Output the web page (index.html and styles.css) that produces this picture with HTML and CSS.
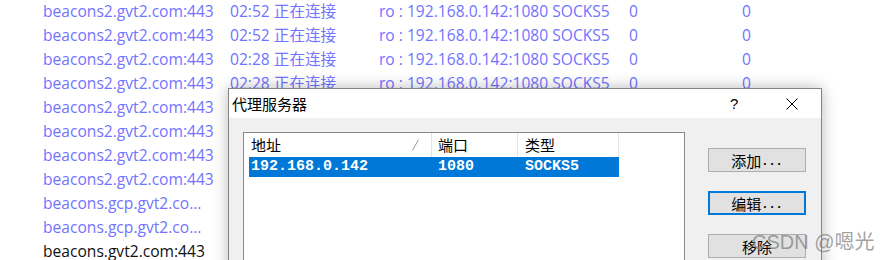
FILE: index.html
```html
<!DOCTYPE html>
<html lang="zh">
<head>
<meta charset="utf-8">
<link rel="stylesheet" href="styles.css">
</head>
<body>
<div class="conns">
  <div class="row"><span class="c-host">beacons2.gvt2.com:443</span><span class="c-time">02:52 正在连接</span><span class="c-proxy">ro : 192.168.0.142:1080 SOCKS5</span><span class="c-n1">0</span><span class="c-n2">0</span></div>
  <div class="row"><span class="c-host">beacons2.gvt2.com:443</span><span class="c-time">02:52 正在连接</span><span class="c-proxy">ro : 192.168.0.142:1080 SOCKS5</span><span class="c-n1">0</span><span class="c-n2">0</span></div>
  <div class="row"><span class="c-host">beacons2.gvt2.com:443</span><span class="c-time">02:28 正在连接</span><span class="c-proxy">ro : 192.168.0.142:1080 SOCKS5</span><span class="c-n1">0</span><span class="c-n2">0</span></div>
  <div class="row"><span class="c-host">beacons2.gvt2.com:443</span><span class="c-time">02:28 正在连接</span><span class="c-proxy">ro : 192.168.0.142:1080 SOCKS5</span><span class="c-n1">0</span><span class="c-n2">0</span></div>
  <div class="row"><span class="c-host">beacons2.gvt2.com:443</span><span class="c-time">02:28 正在连接</span><span class="c-proxy">ro : 192.168.0.142:1080 SOCKS5</span><span class="c-n1">0</span><span class="c-n2">0</span></div>
  <div class="row"><span class="c-host">beacons2.gvt2.com:443</span><span class="c-time">02:28 正在连接</span><span class="c-proxy">ro : 192.168.0.142:1080 SOCKS5</span><span class="c-n1">0</span><span class="c-n2">0</span></div>
  <div class="row"><span class="c-host">beacons2.gvt2.com:443</span><span class="c-time">02:28 正在连接</span><span class="c-proxy">ro : 192.168.0.142:1080 SOCKS5</span><span class="c-n1">0</span><span class="c-n2">0</span></div>
  <div class="row"><span class="c-host">beacons2.gvt2.com:443</span><span class="c-time">02:28 正在连接</span><span class="c-proxy">ro : 192.168.0.142:1080 SOCKS5</span><span class="c-n1">0</span><span class="c-n2">0</span></div>
  <div class="row"><span class="c-host">beacons.gcp.gvt2.co...</span><span class="c-time">02:28 正在连接</span><span class="c-proxy">ro : 192.168.0.142:1080 SOCKS5</span><span class="c-n1">0</span><span class="c-n2">0</span></div>
  <div class="row"><span class="c-host">beacons.gcp.gvt2.co...</span><span class="c-time">02:28 正在连接</span><span class="c-proxy">ro : 192.168.0.142:1080 SOCKS5</span><span class="c-n1">0</span><span class="c-n2">0</span></div>
  <div class="row done"><span class="c-host">beacons.gvt2.com:443</span><span class="c-time">02:28 已关闭</span><span class="c-proxy">ro : 192.168.0.142:1080 SOCKS5</span><span class="c-n1">0</span><span class="c-n2">0</span></div>
</div>

<div class="dialog">
  <div class="titlebar">
    <span class="title">代理服务器</span>
    <span class="help">?</span>
    <span class="close"><svg width="12" height="12" viewBox="0 0 12 12"><path d="M0.5 0.5 L11.5 11.5 M11.5 0.5 L0.5 11.5" stroke="#000" stroke-width="1" fill="none"/></svg></span>
  </div>
  <div class="body">
    <div class="listbox">
      <div class="lv-head">
        <div class="h1"><span>地址</span><svg class="sort" width="7" height="12" viewBox="0 0 7 12"><path d="M0.5 11.5 L6.5 0.5" stroke="#9a9a9a" stroke-width="1" fill="none"/></svg></div>
        <div class="h2">端口</div>
        <div class="h3">类型</div>
      </div>
      <div class="lv-row selected">
        <div class="d1">192.168.0.142</div>
        <div class="d2">1080</div>
        <div class="d3">SOCKS5</div>
      </div>
    </div>
    <div class="buttons">
      <div class="btn">添加<span class="dots">...</span></div>
      <div class="btn default">编辑<span class="dots">...</span></div>
      <div class="btn">移除</div>
    </div>
  </div>
</div>

<div class="watermark">CSDN @嗯光</div>
</body>
</html>
```

FILE: styles.css
```css
html, body {
  margin: 0;
  padding: 0;
  background: #ffffff;
  width: 896px;
  height: 260px;
  overflow: hidden;
}

body {
  position: relative;
  font-family: "Open Sans", "Noto Sans CJK SC", sans-serif;
}

.conns {
  padding-left: 43px;
  margin-top: -1px;
}

.row {
  display: flex;
  height: 24px;
  line-height: 24px;
  font-size: 15.6px;
  color: #7373ff;
  white-space: nowrap;
}

.row.done {
  color: #111111;
}

.c-host { width: 187px; overflow: hidden; }
.c-time { width: 149px; }
.c-proxy { width: 250px; }
.c-n1 { width: 113px; }
.c-n2 { width: 40px; }

.dialog {
  position: absolute;
  left: 228px;
  top: 88px;
  width: 592px;
  height: 200px;
  border: 1px solid #858585;
  background: #f0f0f0;
  box-shadow: 0 0 14px rgba(0, 0, 0, 0.28);
  font-family: "Noto Sans CJK SC", sans-serif;
}

.titlebar {
  height: 29px;
  background: #ffffff;
  display: flex;
  align-items: center;
  font-size: 15px;
  color: #000;
}

.title {
  padding-left: 3px;
  flex: 1;
}

.help {
  width: 10px;
  font-family: "Liberation Sans", sans-serif;
  font-size: 15px;
  margin-right: 46px;
}

.close {
  display: flex;
  width: 12px;
  height: 12px;
  margin-right: 23px;
  margin-top: 1px;
}

.body {
  display: flex;
  padding: 14px 0 0 14px;
}

.listbox {
  width: 440px;
  height: 160px;
  border: 1px solid #828790;
  background: #ffffff;
}

.lv-head {
  display: flex;
  height: 24px;
  padding-left: 5px;
  font-size: 15px;
  line-height: 24px;
  color: #000;
}

.lv-head > div {
  border-right: 1px solid #e5e5e5;
  box-sizing: border-box;
}

.h1 {
  width: 183px;
  padding-left: 2px;
  display: flex;
  justify-content: space-between;
  align-items: center;
  padding-right: 12px;
}

.sort { display: block; }

.h2 { width: 86px; padding-left: 6px; }
.h3 { width: 101px; padding-left: 7px; }

.lv-row {
  display: flex;
  margin-left: 5px;
  height: 20px;
  line-height: 20px;
  font-family: "Liberation Mono", monospace;
  font-weight: bold;
  font-size: 15px;
}

.lv-row.selected {
  width: 370px;
  background: #0078d7;
  color: #ffffff;
}

.d1 { width: 183px; padding-left: 2px; box-sizing: border-box; }
.d2 { width: 86px; padding-left: 6px; box-sizing: border-box; }
.d3 { width: 101px; padding-left: 7px; box-sizing: border-box; }

.buttons {
  display: flex;
  flex-direction: column;
  gap: 19px;
  margin-left: 23px;
  padding-top: 16px;
}

.btn {
  width: 98px;
  height: 24px;
  box-sizing: border-box;
  border: 1px solid #adadad;
  background: #e1e1e1;
  display: flex;
  align-items: center;
  justify-content: center;
  font-size: 15px;
  color: #000;
}

.btn.default {
  border: 2px solid #0078d7;
}

.dots {
  font-family: "Liberation Mono", monospace;
  font-size: 12px;
  font-weight: bold;
  margin-top: 3px;
}

.watermark {
  position: absolute;
  left: 752px;
  top: 226px;
  font-family: "Liberation Sans", "Noto Sans CJK SC", sans-serif;
  font-size: 20px;
  color: rgba(130, 130, 130, 0.75);
  white-space: nowrap;
}
```
